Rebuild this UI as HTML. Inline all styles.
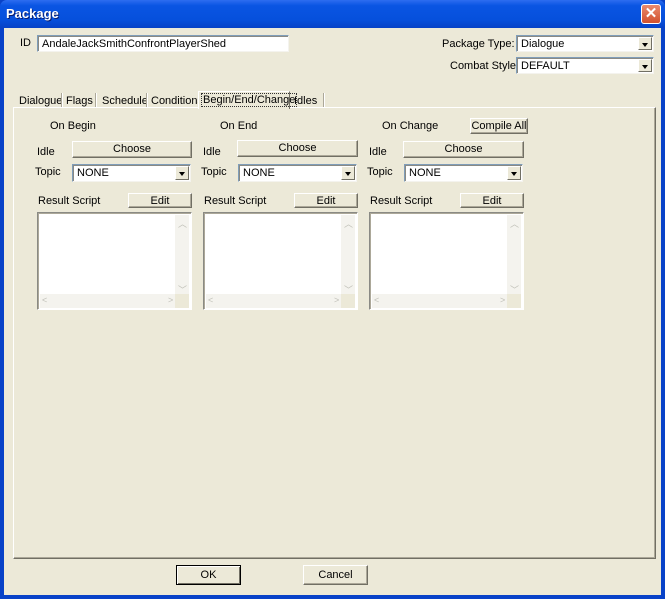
<!DOCTYPE html>
<html><head><meta charset="utf-8"><style>
*{box-sizing:border-box;margin:0;padding:0}
body{width:665px;height:599px;overflow:hidden;background:#0842c8;font-family:"Liberation Sans",sans-serif;font-size:11px;color:#000;position:relative}
.a{position:absolute}
#title{left:0;top:0;width:665px;height:28px;background:linear-gradient(#2d6df0,#0a55e3 20%,#0650dc 70%,#0641c6);border-radius:7px 7px 0 0}
#title span{position:absolute;left:6px;top:6px;color:#fff;font-weight:bold;font-size:13px;text-shadow:1px 1px #0a1e6e}
#close{left:641px;top:4px;width:20px;height:20px;background:linear-gradient(#e98a6d,#d2502d);border:1px solid #fff;border-radius:3px;color:#fff;font-size:15px;line-height:17px;text-align:center;font-weight:bold}
#client{left:4px;top:28px;width:657px;height:567px;background:#ece9d8}
.t{position:absolute;white-space:nowrap}
.inp{position:absolute;background:#fff;border:1px solid;border-color:#7f9db9 #f4f3ee #f4f3ee #7f9db9;box-shadow:inset 1px 1px #8a8a84;padding:2px 0 0 4px;white-space:nowrap}
.dd{position:absolute;right:1px;top:1px;width:14px;bottom:1px;background:#ece9d8;border:1px solid;border-color:#fff #716f64 #716f64 #fff}
.dd:after{content:"";position:absolute;left:3px;top:5px;border:3px solid transparent;border-top:4px solid #000}
.btn{position:absolute;background:#ece9d8;border:1px solid;border-color:#fff #716f64 #716f64 #fff;box-shadow:inset -1px -1px #aca899;text-align:center;line-height:14px}
.ta{position:absolute;width:155px;height:98px;background:#fff;border:1px solid;border-color:#8a8a84 #fff #fff #8a8a84;box-shadow:inset 1px 1px #aca899}
.vs{position:absolute;right:2px;top:2px;width:14px;height:82px;background:#f4f3ee}
.hs{position:absolute;left:2px;bottom:1px;width:137px;height:14px;background:#f4f3ee}
.cor{position:absolute;right:2px;bottom:1px;width:14px;height:14px;background:#ece9d8}
.ar{position:absolute;color:#c0c0b8;font-size:9px}
</style></head><body>
<div class="a" id="title"><span>Package</span></div>
<div class="a" id="close">✕</div>
<div class="a" id="client"></div>

<div class="t" style="left:20px;top:37px">ID</div>
<div class="inp" style="left:37px;top:35px;width:252px;height:17px">AndaleJackSmithConfrontPlayerShed</div>
<div class="t" style="left:442px;top:38px">Package Type:</div>
<div class="inp" style="left:516px;top:35px;width:138px;height:17px">Dialogue<div class="dd"></div></div>
<div class="t" style="left:450px;top:60px">Combat Style:</div>
<div class="inp" style="left:516px;top:57px;width:138px;height:17px">DEFAULT<div class="dd"></div></div>

<!-- tabs -->
<div class="a" style="left:13px;top:107px;width:643px;height:452px;border:1px solid;border-color:#fff #716f64 #716f64 #fff;box-shadow:inset -1px -1px #aca899"></div>
<div class="t" style="left:19px;top:95px">Dialogue</div>
<div class="a" style="left:61px;top:93px;width:2px;height:14px;border-left:1px solid #aca899;border-right:1px solid #fff"></div>
<div class="t" style="left:66px;top:95px">Flags</div>
<div class="a" style="left:95px;top:93px;width:2px;height:14px;border-left:1px solid #aca899;border-right:1px solid #fff"></div>
<div class="t" style="left:102px;top:95px">Schedule</div>
<div class="a" style="left:146px;top:93px;width:2px;height:14px;border-left:1px solid #aca899;border-right:1px solid #fff"></div>
<div class="t" style="left:151px;top:95px">Conditions</div>
<div class="a" style="left:198px;top:91px;width:92px;height:18px;background:#ece9d8;border:1px solid;border-bottom:none;border-color:#fff #716f64 #fff #fff"></div>
<div class="t" style="left:201px;top:93px;border:1px dotted #333;padding:0 1px">Begin/End/Change</div>
<div class="t" style="left:294px;top:95px">Idles</div>
<div class="a" style="left:323px;top:93px;width:2px;height:14px;border-left:1px solid #aca899;border-right:1px solid #fff"></div>

<div class="t" style="left:50px;top:120px">On Begin</div>
<div class="t" style="left:220px;top:120px">On End</div>
<div class="t" style="left:382px;top:120px">On Change</div>
<div class="btn" style="left:470px;top:118px;width:58px;height:16px">Compile All</div>

<div class="t" style="left:37px;top:146px">Idle</div><div class="t" style="left:203px;top:146px">Idle</div><div class="t" style="left:369px;top:146px">Idle</div>
<div class="btn" style="left:72px;top:141px;width:120px;height:17px">Choose</div>
<div class="btn" style="left:237px;top:140px;width:121px;height:17px">Choose</div>
<div class="btn" style="left:403px;top:141px;width:121px;height:17px">Choose</div>
<div class="t" style="left:35px;top:166px">Topic</div><div class="t" style="left:201px;top:166px">Topic</div><div class="t" style="left:367px;top:166px">Topic</div>
<div class="inp" style="left:72px;top:164px;width:119px;height:18px">NONE<div class="dd"></div></div>
<div class="inp" style="left:238px;top:164px;width:119px;height:18px">NONE<div class="dd"></div></div>
<div class="inp" style="left:404px;top:164px;width:119px;height:18px">NONE<div class="dd"></div></div>

<div class="t" style="left:38px;top:195px">Result Script</div><div class="t" style="left:204px;top:195px">Result Script</div><div class="t" style="left:370px;top:195px">Result Script</div>
<div class="btn" style="left:128px;top:193px;width:64px;height:15px">Edit</div>
<div class="btn" style="left:294px;top:193px;width:64px;height:15px">Edit</div>
<div class="btn" style="left:460px;top:193px;width:64px;height:15px">Edit</div>

<div class="ta" style="left:37px;top:212px"><div class="vs"><span class="ar" style="left:3px;top:2px">︿</span><span class="ar" style="left:3px;top:68px">﹀</span></div><div class="hs"><span class="ar" style="left:2px;top:1px">&lt;</span><span class="ar" style="left:128px;top:1px">&gt;</span></div><div class="cor"></div></div>
<div class="ta" style="left:203px;top:212px"><div class="vs"><span class="ar" style="left:3px;top:2px">︿</span><span class="ar" style="left:3px;top:68px">﹀</span></div><div class="hs"><span class="ar" style="left:2px;top:1px">&lt;</span><span class="ar" style="left:128px;top:1px">&gt;</span></div><div class="cor"></div></div>
<div class="ta" style="left:369px;top:212px"><div class="vs"><span class="ar" style="left:3px;top:2px">︿</span><span class="ar" style="left:3px;top:68px">﹀</span></div><div class="hs"><span class="ar" style="left:2px;top:1px">&lt;</span><span class="ar" style="left:128px;top:1px">&gt;</span></div><div class="cor"></div></div>

<div class="btn" style="left:176px;top:565px;width:65px;height:20px;line-height:18px;border-color:#000;box-shadow:inset 1px 1px #fff,inset -1px -1px #716f64">OK</div>
<div class="btn" style="left:303px;top:565px;width:65px;height:20px;line-height:18px">Cancel</div>
</body></html>
